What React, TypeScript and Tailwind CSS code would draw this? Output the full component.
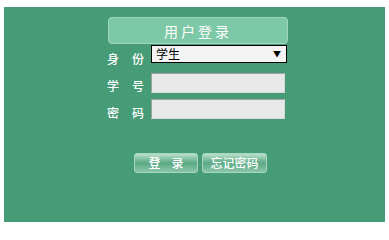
export default function App() {
  const cjk = { fontFamily: '"Noto Sans CJK SC", "Liberation Sans", sans-serif' };
  return (
    <div className="h-[229px] w-[389px] bg-white px-[4px] pt-[7px]" style={cjk}>
      <div className="h-[215px] w-[381px] bg-[#479c78] pl-[103px] pt-[10px]">
        {/* Header */}
        <div className="ml-[1px] flex h-[27px] w-[180px] items-center justify-center rounded-[4px] border border-[#9fd8bd] bg-[#7dc8a6] text-[14px] leading-none tracking-[3px] text-white">
          用户登录
        </div>

        {/* Identity */}
        <div className="mt-[1px] flex items-start">
          <Label a="身" b="份" top="mt-[8px]" />
          <div className="ml-[7px] flex h-[18px] w-[136px] items-center justify-between border border-black bg-[#f4f4f4] pl-[4px] pr-[5px]">
            <span className="text-[12px] leading-none text-black">学生</span>
            <span className="text-[8px] leading-none text-black">▼</span>
          </div>
        </div>

        {/* Student number */}
        <div className="mt-[8px] flex items-start">
          <Label a="学" b="号" top="mt-[7px]" />
          <div className="ml-[7px] h-[20px] w-[134px] border border-t-[#a0a0a0] border-l-[#a0a0a0] border-r-[#d8d8d8] border-b-[#d8d8d8] bg-[#e8e8e8]" />
        </div>

        {/* Password */}
        <div className="mt-[6px] flex items-start">
          <Label a="密" b="码" top="mt-[8px]" />
          <div className="ml-[7px] h-[20px] w-[134px] border border-t-[#a0a0a0] border-l-[#a0a0a0] border-r-[#d8d8d8] border-b-[#d8d8d8] bg-[#e8e8e8]" />
        </div>

        {/* Buttons */}
        <div className="ml-[27px] mt-[34px] flex gap-[4px]">
          <Btn w="w-[64px]">
            <span className="tracking-[11px] pl-[11px]">登录</span>
          </Btn>
          <Btn w="w-[65px]">忘记密码</Btn>
        </div>
      </div>
    </div>
  );
}

function Label({ a, b, top }: { a: string; b: string; top: string }) {
  return (
    <div className={`flex w-[37px] justify-between text-[12px] font-medium leading-none text-white ${top}`}>
      <span>{a}</span>
      <span>{b}</span>
    </div>
  );
}

function Btn({ w, children }: { w: string; children: React.ReactNode }) {
  return (
    <div
      className={`flex h-[20px] ${w} items-center justify-center rounded-[3px] border border-[#a9d6c0] bg-gradient-to-b from-[#b9e0cc] via-[#5aa985] to-[#8cc6aa] text-[12px] font-medium leading-none text-white`}
    >
      {children}
    </div>
  );
}
